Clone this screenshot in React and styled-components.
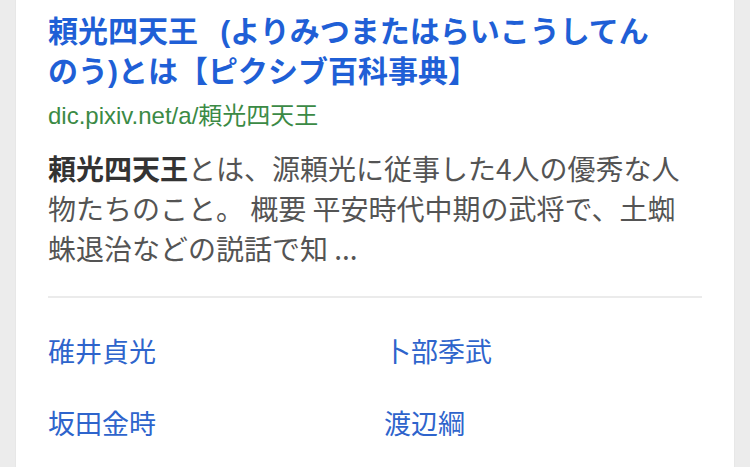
import React from "react";
import styled, { createGlobalStyle } from "styled-components";

const GlobalStyle = createGlobalStyle`
  html, body {
    margin: 0;
    padding: 0;
    background: #ececec;
  }
  body {
    font-family: "Liberation Sans", "Noto Sans CJK JP", sans-serif;
    -webkit-font-smoothing: antialiased;
  }
`;

const Page = styled.div`
  padding: 0 16px;
  min-height: 467px;
  box-sizing: border-box;
`;

const Card = styled.div`
  background: #ffffff;
  min-height: 467px;
  padding: 12px 32px 0 32px;
  box-sizing: border-box;
  box-shadow: 0 0 1px rgba(0, 0, 0, 0.12);
`;

const Title = styled.a`
  display: block;
  max-width: 610px;
  font-family: "Liberation Sans", "Noto Sans CJK JP", sans-serif;
  font-size: 30px;
  line-height: 40px;
  font-weight: 700;
  word-spacing: 14px;
  color: #1f5fd6;
  text-decoration: none;
`;

const Url = styled.div`
  margin-top: 8px;
  font-family: "Liberation Sans", "Noto Sans CJK JP", sans-serif;
  font-size: 24px;
  line-height: 32px;
  color: #3b8a45;
`;

const Snippet = styled.p`
  margin: 16px 0 0 0;
  font-family: "Noto Sans CJK JP", sans-serif;
  font-size: 28px;
  line-height: 40px;
  color: #545454;
`;

const Em = styled.span`
  font-weight: 700;
  color: #333333;
`;

const Divider = styled.hr`
  margin: 28px 0 0 0;
  border: none;
  height: 2px;
  background: #ebebeb;
`;

const Links = styled.div`
  display: grid;
  grid-template-columns: 336px 1fr;
  grid-auto-rows: 72px;
  padding-top: 16px;
`;

const LinkItem = styled.a`
  display: flex;
  align-items: center;
  font-family: "Noto Sans CJK JP", sans-serif;
  font-size: 27px;
  color: #2e64cc;
  text-decoration: none;
`;

const links = ["碓井貞光", "卜部季武", "坂田金時", "渡辺綱"];

export default function App() {
  return (
    <>
      <GlobalStyle />
      <Page>
        <Card>
          <Title href="#">
            頼光四天王 (よりみつまたはらいこうしてんのう)とは【ピクシブ百科事典】
          </Title>
          <Url>dic.pixiv.net/a/頼光四天王</Url>
          <Snippet>
            <Em>頼光四天王</Em>とは、源頼光に従事した4人の優秀な人物たちのこと。 概要 平安時代中期の武将で、土蜘蛛退治などの説話で知 ...
          </Snippet>
          <Divider />
          <Links>
            {links.map((l) => (
              <LinkItem href="#" key={l}>
                {l}
              </LinkItem>
            ))}
          </Links>
        </Card>
      </Page>
    </>
  );
}
